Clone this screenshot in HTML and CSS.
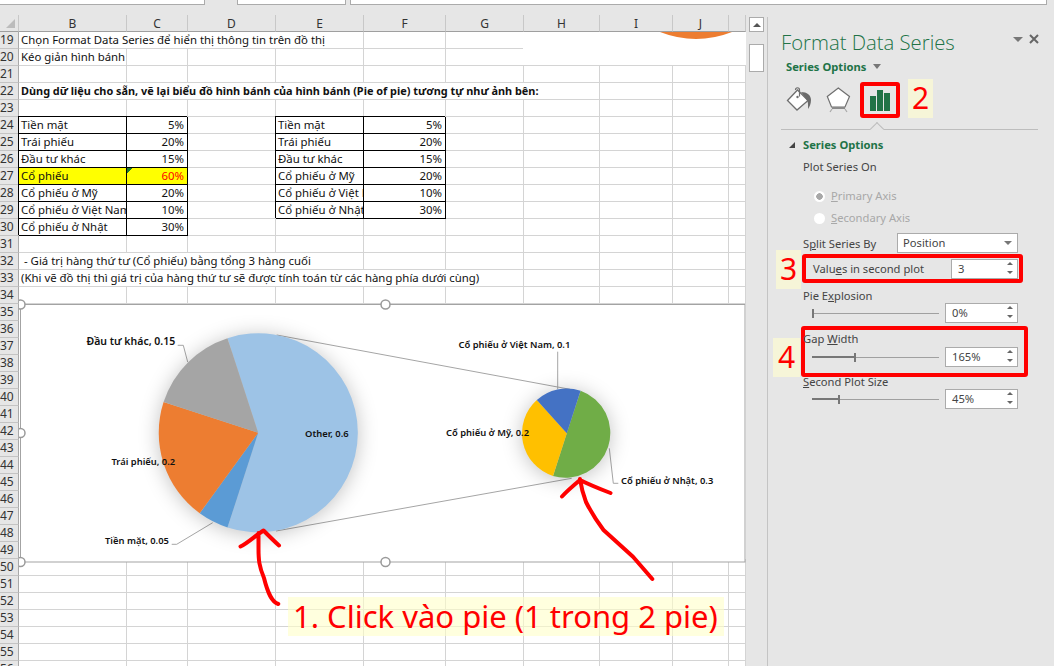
FILE: index.html
```html
<!DOCTYPE html>
<html lang="vi">
<head>
    <meta charset="UTF-8">
    <title>Format Data Series</title>
    <link rel="stylesheet" href="styles.css">
</head>
<body>
    <header class="top_strip">
        <div class="top_box box_a"></div>
        <div class="top_box box_b"></div>
        <div class="top_box box_c"></div>
    </header>
    <main class="app">
        <section class="sheet">
            <table class="grid">
                <colgroup>
                    <col class="c_head"><col class="c_b"><col class="c_c"><col class="c_d"><col class="c_e"><col class="c_f"><col class="c_g"><col class="c_h"><col class="c_i"><col class="c_j"><col class="c_k">
                </colgroup>
                <thead>
                    <tr><th class="corner"><span></span></th><th>B</th><th>C</th><th>D</th><th>E</th><th>F</th><th>G</th><th>H</th><th>I</th><th>J</th><th></th></tr>
                </thead>
                <tbody>
                    <tr><th>19</th><td colspan="4">Chọn Format Data Series để hiển thị thông tin trên đồ thị</td><td></td><td></td><td></td><td></td><td></td><td></td></tr>
                    <tr><th>20</th><td>Kéo giản hình bánh</td><td></td><td></td><td></td><td></td><td></td><td></td><td></td><td></td><td></td></tr>
                    <tr><th>21</th><td></td><td></td><td></td><td></td><td></td><td></td><td></td><td></td><td></td><td></td></tr>
                    <tr><th>22</th><td colspan="7" class="bold">Dùng dữ liệu cho sẵn, vẽ lại biểu đồ hình bánh của hình bánh (Pie of pie) tương tự như ảnh bên:</td><td></td><td></td><td></td></tr>
                    <tr><th>23</th><td></td><td></td><td></td><td></td><td></td><td></td><td></td><td></td><td></td><td></td></tr>
                    <tr><th>24</th><td class="boxed">Tiền mặt</td><td class="boxed num">5%</td><td></td><td class="boxed">Tiền mặt</td><td class="boxed num">5%</td><td></td><td></td><td></td><td></td><td></td></tr>
                    <tr><th>25</th><td class="boxed">Trái phiếu</td><td class="boxed num">20%</td><td></td><td class="boxed">Trái phiếu</td><td class="boxed num">20%</td><td></td><td></td><td></td><td></td><td></td></tr>
                    <tr><th>26</th><td class="boxed">Đầu tư khác</td><td class="boxed num">15%</td><td></td><td class="boxed">Đầu tư khác</td><td class="boxed num">15%</td><td></td><td></td><td></td><td></td><td></td></tr>
                    <tr><th>27</th><td class="boxed yellow">Cổ phiếu</td><td class="boxed num yellow flagged">60%</td><td></td><td class="boxed">Cổ phiếu ở Mỹ</td><td class="boxed num">20%</td><td></td><td></td><td></td><td></td><td></td></tr>
                    <tr><th>28</th><td class="boxed">Cổ phiếu ở Mỹ</td><td class="boxed num">20%</td><td></td><td class="boxed">Cổ phiếu ở Việt Nam</td><td class="boxed num">10%</td><td></td><td></td><td></td><td></td><td></td></tr>
                    <tr><th>29</th><td class="boxed">Cổ phiếu ở Việt Nam</td><td class="boxed num">10%</td><td></td><td class="boxed">Cổ phiếu ở Nhật</td><td class="boxed num">30%</td><td></td><td></td><td></td><td></td><td></td></tr>
                    <tr><th>30</th><td class="boxed">Cổ phiếu ở Nhật</td><td class="boxed num">30%</td><td></td><td></td><td></td><td></td><td></td><td></td><td></td><td></td></tr>
                    <tr><th>31</th><td></td><td></td><td></td><td></td><td></td><td></td><td></td><td></td><td></td><td></td></tr>
                    <tr><th>32</th><td colspan="4">&nbsp;- Giá trị hàng thứ tư (Cổ phiếu) bằng tổng 3 hàng cuối</td><td></td><td></td><td></td><td></td><td></td><td></td></tr>
                    <tr><th>33</th><td colspan="6">(Khi vẽ đồ thị thì giá trị của hàng thứ tư sẽ được tính toán từ các hàng phía dưới cùng)</td><td></td><td></td><td></td><td></td></tr>
                    <tr><th>34</th><td></td><td></td><td></td><td></td><td></td><td></td><td></td><td></td><td></td><td></td></tr>
                    <tr><th>35</th></tr>
                    <tr><th>36</th></tr>
                    <tr><th>37</th></tr>
                    <tr><th>38</th></tr>
                    <tr><th>39</th></tr>
                    <tr><th>40</th></tr>
                    <tr><th>41</th></tr>
                    <tr><th>42</th></tr>
                    <tr><th>43</th></tr>
                    <tr><th>44</th></tr>
                    <tr><th>45</th></tr>
                    <tr><th>46</th></tr>
                    <tr><th>47</th></tr>
                    <tr><th>48</th></tr>
                    <tr><th>49</th></tr>
                    <tr><th>50</th><td></td><td></td><td></td><td></td><td></td><td></td><td></td><td></td><td></td><td></td></tr>
                    <tr><th>51</th><td></td><td></td><td></td><td></td><td></td><td></td><td></td><td></td><td></td><td></td></tr>
                    <tr><th>52</th><td></td><td></td><td></td><td></td><td></td><td></td><td></td><td></td><td></td><td></td></tr>
                    <tr><th>53</th><td></td><td></td><td></td><td></td><td></td><td></td><td></td><td></td><td></td><td></td></tr>
                    <tr><th>54</th><td></td><td></td><td></td><td></td><td></td><td></td><td></td><td></td><td></td><td></td></tr>
                    <tr><th>55</th><td></td><td></td><td></td><td></td><td></td><td></td><td></td><td></td><td></td><td></td></tr>
                    <tr><th>56</th><td></td><td></td><td></td><td></td><td></td><td></td><td></td><td></td><td></td><td></td></tr>
                </tbody>
            </table>

            <!-- phan duoi cua bieu do khac, nam de len hang 19-20 -->
            <svg class="old_chart" viewBox="523 32 223 33">
                <rect x="523" y="32" width="223" height="33" fill="#fff"/>
                <path d="M660 32 Q696 46 732 32 Z" fill="#ed7d31"/>
            </svg>

            <svg class="chart" viewBox="19 295 727 276">
                <rect x="20.500" y="304.500" width="724.500" height="257.500" fill="#fff" stroke="#a3a3a3"/>

                <path class="link" d="M276.700 335 L570 389.300 M276 531 L571.700 478.300"/>
                <path class="link" d="M177.700 345.300 H183.300 L187.700 362 M171.700 544.300 H176.700 L212.700 522.700 M557.700 351.700 V389.300 M609.300 448.300 L613.300 483.300 H618.300"/>

                <g class="pie">
                    <path d="M258.200 432.800 L227.500 338.200 A99.500 99.500 0 1 1 227.500 527.400 Z" fill="#9dc3e6"/>
                    <path d="M258.200 432.800 L227.500 527.400 A99.500 99.500 0 0 1 199.700 513.300 Z" fill="#5b9bd5"/>
                    <path d="M258.200 432.800 L199.700 513.300 A99.500 99.500 0 0 1 163.600 402.100 Z" fill="#ed7d31"/>
                    <path d="M258.200 432.800 L163.600 402.100 A99.500 99.500 0 0 1 227.500 338.200 Z" fill="#a5a5a5"/>
                </g>
                <g class="pie">
                    <path d="M566.800 433.300 L580.600 390.700 A44.800 44.800 0 0 1 553 475.900 Z" fill="#70ad47"/>
                    <path d="M566.800 433.300 L553 475.900 A44.800 44.800 0 0 1 536.800 400 Z" fill="#ffc000"/>
                    <path d="M566.800 433.300 L536.800 400 A44.800 44.800 0 0 1 580.600 390.700 Z" fill="#4472c4"/>
                </g>

                <text class="lbl lbl_big" x="86.500" y="344.500">Đầu tư khác, 0.15</text>
                <text class="lbl" x="305" y="437">Other, 0.6</text>
                <text class="lbl" x="111.500" y="465">Trái phiếu, 0.2</text>
                <text class="lbl" x="105" y="543.500">Tiền mặt, 0.05</text>
                <text class="lbl" x="458.500" y="348">Cổ phiếu ở Việt Nam, 0.1</text>
                <text class="lbl" x="446" y="436">Cổ phiếu ở Mỹ, 0.2</text>
                <text class="lbl" x="621" y="484">Cổ phiếu ở Nhật, 0.3</text>

                <g class="handle">
                    <circle cx="20.500" cy="304.500" r="4.500"/><circle cx="385.500" cy="304.500" r="4.500"/>
                    <circle cx="20.500" cy="433" r="4.500"/>
                    <circle cx="20.500" cy="562" r="4.500"/><circle cx="385.500" cy="562" r="4.500"/>
                </g>
            </svg>

            <div class="note">1. Click vào pie (1 trong 2 pie)</div>

            <!-- mui ten ve tay -->
            <svg class="pens" viewBox="0 15 746 651">
                <path class="pen" d="M278.300 604 C272 602 268 594 264 578 C259 566 258.500 560 258.500 548 L258.500 533 M240.500 546.500 C248 543 256 535 263.500 530.500 C268 535 274 541 279 545.500"/>
                <path class="pen" d="M652.300 579 L633 556.700 L603.500 530 C596 520 590 510 586 502 C583 494 581 486 580 479 M562 496.500 C568 490 574 485 580 480 C590 485 600 489 610.500 493"/>
            </svg>
        </section>

        <div class="scrollbar">
            <div class="scroll_btn"><span></span></div>
            <div class="scroll_thumb"></div>
        </div>

        <aside class="panel">
            <div class="panel_tools">
                <span class="tool_caret"></span>
                <svg class="tool_close" viewBox="0 0 10 10"><path d="M1 1 L9 9 M9 1 L1 9"/></svg>
            </div>
            <h1 class="panel_title">Format Data Series</h1>
            <div class="panel_sub">Series Options <span class="sub_caret"></span></div>

            <div class="tabs">
                <svg class="tab_bucket" viewBox="785 86 28 28">
                    <path d="M787.500 100.500 L797.500 90 L808 100.500 L797 110 Z" fill="#fff" stroke="#6f6f6f" stroke-width="1.300"/>
                    <path d="M795.500 90 C795.500 87 799.500 87 799.500 90 V96.500" fill="none" stroke="#6f6f6f" stroke-width="1.200"/>
                    <circle cx="797.500" cy="97" r="1.200" fill="#6f6f6f"/>
                    <path d="M801 92 C807 92 811 95 811 100 C811 104 809.500 107 808 109 C808 105 808.500 102 806.500 99.500 Z" fill="#6a6a6a"/>
                </svg>
                <svg class="tab_shape" viewBox="826 86 26 28">
                    <path d="M838.300 88 L849.500 96.500 L845 107 H831.500 L827.300 96.500 Z" fill="#fff" stroke="#6f6f6f" stroke-width="1.200"/>
                    <path d="M832 108 H845" stroke="#8a8a8a" stroke-width="2"/>
                    <path d="M832 109 L830 112 M845 109 L847 112" stroke="#a8a8a8" stroke-width="1.200"/>
                </svg>
                <div class="tab_active">
                    <svg class="tab_bars" viewBox="0 0 20 21">
                        <rect x="0" y="6" width="6" height="15"/>
                        <rect x="7" y="0" width="6" height="21"/>
                        <rect x="14" y="3" width="6" height="18"/>
                    </svg>
                </div>
                <div class="tag tag_two">2</div>
            </div>
            <div class="divider"><span></span></div>

            <div class="section_title"><span class="tri"></span>Series Options</div>
            <div class="field_label">Plot Series On</div>
            <div class="radio on first"><span class="dot"></span><span><u>P</u>rimary Axis</span></div>
            <div class="radio"><span class="dot"></span><span><u>S</u>econdary Axis</span></div>

            <div class="split_row">
                <span class="split_label">S<u>p</u>lit Series By</span>
                <div class="select">Position<span class="select_caret"></span></div>
            </div>

            <div class="hl hl_values">
                <div class="tag tag_three">3</div>
                <span>Valu<u>e</u>s in second plot</span>
                <div class="spin spin_short">3<span class="arrows"><i></i><b></b></span></div>
            </div>

            <div class="field_label explosion">Pie E<u>x</u>plosion</div>
            <div class="slider_row">
                <div class="slider"><span class="thumb"></span></div>
                <div class="spin">0%<span class="arrows"><i></i><b></b></span></div>
            </div>

            <div class="hl hl_gap">
                <div class="tag tag_four">4</div>
                <div class="gap_label">Gap <u>W</u>idth</div>
                <div class="slider_row">
                    <div class="slider"><span class="fill fill_gap"></span><span class="thumb"></span></div>
                    <div class="spin">165%<span class="arrows"><i></i><b></b></span></div>
                </div>
            </div>

            <div class="field_label second"><u>S</u>econd Plot Size</div>
            <div class="slider_row">
                <div class="slider"><span class="fill fill_size"></span><span class="thumb"></span></div>
                <div class="spin">45%<span class="arrows"><i></i><b></b></span></div>
            </div>
        </aside>
    </main>
</body>
</html>
```
FILE: styles.css
```css
* {
    box-sizing: border-box;
}
html, body {
    margin: 0;
    height: 666px;
    overflow: hidden;
}
body {
    background: #e6e6e6;
    font-family: "Noto Sans", sans-serif;
    color: #444;
}

/* thanh tren cung */
.top_strip {
    display: flex;
    height: 15px;
}
.top_box {
    height: 5px;
    background: #fff;
    border: 1px solid #ababab;
    border-top: none;
}
.box_a { width: 205px; border-left: none; }
.box_b { width: 109px; margin-left: 32px; }
.box_c { width: 697px; margin-left: 4px; }

.app {
    display: flex;
    height: 651px;
}

/* bang tinh */
.sheet {
    position: relative;
    width: 746px;
    flex: none;
    overflow: hidden;
    background: #fff;
}
.grid {
    table-layout: fixed;
    width: 746px;
    border-collapse: separate;
    border-spacing: 0;
    font-size: 11.4px;
    color: #111;
}
.c_head { width: 19px; }
.c_b { width: 108px; }
.c_c { width: 61px; }
.c_d { width: 88px; }
.c_e { width: 88px; }
.c_f { width: 82px; }
.c_g { width: 78px; }
.c_h { width: 76px; }
.c_i { width: 73px; }
.c_j { width: 56px; }
.c_k { width: 17px; }
.grid tr {
    height: 17px;
}
.grid td {
    height: 17px;
    padding: 0 2px 1px;
    line-height: 15px;
    white-space: nowrap;
    overflow: hidden;
    border-right: 1px solid #d4d4d4;
    border-bottom: 1px solid #d4d4d4;
}
.grid th {
    height: 17px;
    padding: 0;
    background: #e6e6e6;
    font-weight: normal;
    font-size: 12px;
    line-height: 15px;
    color: #333;
    text-align: center;
    overflow: hidden;
    border-right: 1px solid #a9a9a9;
    border-bottom: 1px solid #c4c4c4;
}
.grid thead th {
    border-right: 1px solid #c8c8c8;
    border-bottom: 1px solid #9f9f9f;
}
.grid tbody th {
    text-align: right;
    padding: 0 5px 1px 0;
}
.corner {
    vertical-align: middle;
}
.corner span {
    display: block;
    width: 0;
    height: 0;
    margin: 0 0 0 6px;
    border-left: 9px solid transparent;
    border-bottom: 9px solid #bcbcbc;
}
.grid td.bold {
    font-weight: bold;
    font-size: 10.9px;
}
.num {
    text-align: right;
}
.grid td.num {
    padding-right: 3px;
}
.grid td.boxed {
    border-right-color: #000;
    border-bottom-color: #000;
    box-shadow: -1px -1px 0 #000;
}
.yellow {
    background: #ffff00;
}
.flagged {
    color: #f00;
    background: linear-gradient(135deg, #1b7a2e 4px, transparent 4px), #ffff00;
}

/* hai bieu do nam de len luoi */
.old_chart {
    position: absolute;
    left: 523px;
    top: 17px;
    width: 223px;
    height: 33px;
}
.chart {
    position: absolute;
    left: 19px;
    top: 280px;
    width: 727px;
    height: 276px;
}
.pens {
    position: absolute;
    left: 0;
    top: 0;
    width: 746px;
    height: 651px;
}
.link {
    fill: none;
    stroke: #a5a5a5;
    stroke-width: 1;
}
.pie {
    filter: drop-shadow(0 2px 10px rgba(0, 0, 0, 0.24));
}
.lbl {
    font-family: "Noto Sans", sans-serif;
    font-size: 9.4px;
    font-weight: 600;
    fill: #111;
}
.lbl_big {
    font-size: 10.5px;
}
.handle circle {
    fill: #fff;
    stroke: #9a9a9a;
    stroke-width: 1.5;
}
.pen {
    fill: none;
    stroke: #f00;
    stroke-width: 4;
    stroke-linecap: round;
    stroke-linejoin: round;
}
.note {
    position: absolute;
    left: 288px;
    top: 582px;
    width: 436px;
    height: 39px;
    padding-left: 5px;
    background: rgba(255, 255, 200, 0.6);
    color: #f00;
    font-size: 31px;
    line-height: 38px;
    white-space: nowrap;
}

/* thanh cuon */
.scrollbar {
    width: 21px;
    flex: none;
    padding: 2px 3px 0;
}
.scroll_btn {
    height: 15px;
    background: #fff;
    border: 1px solid #ababab;
    display: flex;
    align-items: center;
    justify-content: center;
}
.scroll_btn span {
    width: 0;
    height: 0;
    border: 4px solid transparent;
    border-top: none;
    border-bottom: 4px solid #555;
}
.scroll_thumb {
    height: 28px;
    margin-top: 12px;
    background: #fff;
    border: 1px solid #ababab;
}

/* panel ben phai */
.panel {
    position: relative;
    width: 287px;
    flex: none;
    border-left: 1px solid #c4c4c4;
    margin-top: 2px;
    padding-top: 12px;
    font-size: 11.2px;
}
.panel_tools {
    position: absolute;
    right: 15px;
    top: 17px;
    display: flex;
    align-items: center;
    gap: 6px;
}
.tool_caret {
    width: 0;
    height: 0;
    border: 5px solid transparent;
    border-bottom: none;
    border-top: 5px solid #777;
}
.tool_close {
    width: 10px;
    height: 10px;
    stroke: #666;
    stroke-width: 2;
}
.panel_title {
    margin: 0 0 0 13px;
    font-family: "Open Sans", sans-serif;
    font-size: 20.3px;
    font-weight: 300;
    line-height: 26px;
    color: #217346;
    white-space: nowrap;
}
.panel_sub {
    margin: 4px 0 0 18px;
    line-height: 16px;
    font-weight: bold;
    color: #217346;
}
.sub_caret {
    display: inline-block;
    width: 0;
    height: 0;
    margin-left: 4px;
    vertical-align: 2px;
    border: 4px solid transparent;
    border-bottom: none;
    border-top: 5px solid #777;
}
.tabs {
    display: flex;
    height: 39px;
    margin-top: 4px;
    padding-left: 17px;
}
.tab_bucket {
    width: 28px;
    height: 28px;
    margin-top: 7px;
}
.tab_shape {
    width: 26px;
    height: 28px;
    margin: 7px 0 0 13px;
}
.tab_active {
    width: 40px;
    height: 36px;
    margin: 3px 0 0 8px;
    border: 4px solid #f00;
    border-radius: 3px;
    display: flex;
    align-items: center;
    justify-content: center;
}
.tab_bars {
    width: 20px;
    height: 21px;
    fill: #217346;
}
.tag {
    background: #f6f5d8;
    color: #f00;
    font-size: 30px;
    line-height: 38px;
    text-align: center;
}
.tag_two {
    width: 25px;
    height: 39px;
    margin-left: 8px;
}
.divider {
    position: relative;
    height: 1px;
    margin: 11px 16px 0 13px;
    background: #bdbdbd;
}
.divider span {
    position: absolute;
    left: 91px;
    top: -5px;
    width: 10px;
    height: 10px;
    background: #e6e6e6;
    border-left: 1px solid #bdbdbd;
    border-top: 1px solid #bdbdbd;
    transform: rotate(45deg);
}
.section_title {
    display: flex;
    align-items: center;
    margin: 7px 0 0 21px;
    line-height: 16px;
    font-weight: bold;
    color: #217346;
}
.tri {
    width: 0;
    height: 0;
    margin-right: 8px;
    border-left: 6px solid transparent;
    border-bottom: 6px solid #444;
}
.field_label {
    margin: 6px 0 0 35px;
    line-height: 16px;
}
.radio {
    display: flex;
    align-items: center;
    margin: 6px 0 0 46px;
    line-height: 16px;
    color: #a8a8a8;
}
.radio.first {
    margin-top: 13px;
}
.dot {
    width: 11px;
    height: 11px;
    margin-right: 6px;
    border-radius: 50%;
    background: #fff;
}
.radio.on .dot {
    background: radial-gradient(circle, #a8a8a8 3px, #fff 3.5px);
}
.split_row {
    display: flex;
    align-items: center;
    margin: 7px 0 0 35px;
    height: 20px;
}
.split_label {
    width: 94px;
}
.select {
    position: relative;
    width: 121px;
    height: 20px;
    padding-left: 5px;
    line-height: 18px;
    background: #fff;
    border: 1px solid #ababab;
}
.select_caret {
    position: absolute;
    right: 5px;
    top: 7px;
    border: 4px solid transparent;
    border-bottom: none;
    border-top: 4px solid #777;
}
.hl {
    position: relative;
    border: 4px solid #f00;
    border-radius: 3px;
}
.hl_values {
    display: flex;
    align-items: center;
    justify-content: space-between;
    width: 221px;
    height: 29px;
    margin: 1px 0 0 34px;
    padding: 0 1px 0 7px;
}
.hl_gap {
    width: 227px;
    height: 51px;
    margin: 3px 0 0 33px;
}
.tag_three {
    position: absolute;
    left: -30px;
    top: -8px;
    width: 25px;
    height: 39px;
}
.tag_four {
    position: absolute;
    left: -32px;
    top: 8px;
    width: 27px;
    height: 39px;
}
.gap_label {
    margin: 1px 0 0 -2px;
    line-height: 16px;
}
.explosion {
    margin-top: 5px;
}
.second {
    position: relative;
    margin-top: -3px;
}
.slider_row {
    display: flex;
    align-items: center;
    margin: -1px 0 0 44px;
    height: 20px;
}
.hl_gap .slider_row {
    margin: 0 0 0 7px;
}
.slider {
    display: flex;
    align-items: center;
    width: 127px;
    height: 9px;
    background: linear-gradient(#a0a0a0, #a0a0a0) center / 100% 1px no-repeat;
}
.fill {
    height: 2px;
    background: #777;
}
.fill_gap { width: 42px; }
.fill_size { width: 26px; }
.thumb {
    width: 2px;
    height: 9px;
    background: #777;
}
.spin {
    position: relative;
    width: 73px;
    height: 20px;
    margin-left: 6px;
    padding-left: 6px;
    line-height: 18px;
    background: #fff;
    border: 1px solid #ababab;
}
.spin_short {
    width: 67px;
    margin-left: 0;
}
.arrows {
    position: absolute;
    right: 4px;
    top: 2px;
    display: flex;
    flex-direction: column;
    gap: 6px;
}
.arrows i, .arrows b {
    width: 0;
    height: 0;
    border: 3px solid transparent;
}
.arrows i {
    border-top: none;
    border-bottom: 3px solid #666;
}
.arrows b {
    border-bottom: none;
    border-top: 3px solid #666;
}
```
